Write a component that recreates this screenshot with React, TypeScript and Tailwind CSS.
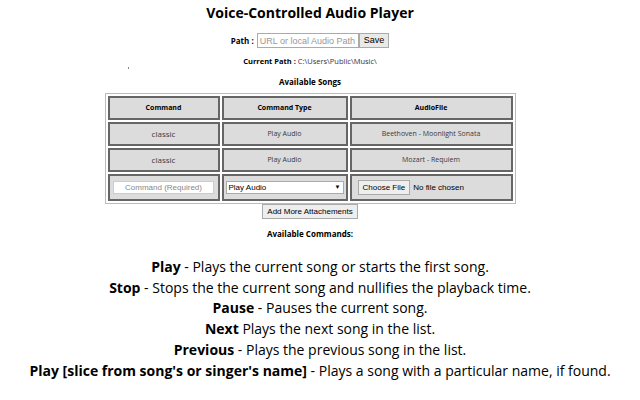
import React from 'react';

const songs = [
  { command: 'classic', type: 'Play Audio', file: 'Beethoven - Moonlight Sonata' },
  { command: 'classic', type: 'Play Audio', file: 'Mozart - Requiem' },
];

const commands = [
  { name: 'Play', sep: ' - ', text: 'Plays the current song or starts the first song.' },
  { name: 'Stop', sep: ' - ', text: 'Stops the the current song and nullifies the playback time.' },
  { name: 'Pause', sep: ' - ', text: 'Pauses the current song.' },
  { name: 'Next', sep: ' ', text: 'Plays the next song in the list.' },
  { name: 'Previous', sep: ' - ', text: 'Plays the previous song in the list.' },
  { name: "Play [slice from song's or singer's name]", sep: ' - ', text: 'Plays a song with a particular name, if found.' },
];

const cell = 'border-2 border-[#666] bg-[#dcdcdc] text-center align-middle';

export default function App() {
  return (
    <div className="w-[640px] h-[400px] bg-white text-black overflow-hidden font-['Open_Sans',sans-serif]">
      <div className="w-[620px]">
        {/* Header */}
        <h1 className="pt-[1px] text-center text-[14px] font-bold leading-[24px]">Voice-Controlled Audio Player</h1>

        <div className="mt-[8px] flex items-center justify-center text-[8px] font-bold">
          <span className="mr-[3px]">Path :</span>
          <input
            className="w-[102px] h-[15px] border border-[#aaa] px-[2px] text-[9px] font-normal font-['Liberation_Sans',sans-serif] placeholder:text-[#999]"
            placeholder="URL or local Audio Path"
          />
          <button className="h-[15px] px-[4px] border border-[#aaa] bg-[#e9e9e9] text-[9px] font-normal font-['Liberation_Sans',sans-serif]">
            Save
          </button>
        </div>

        <div className="mt-[8px] text-center text-[7.5px] leading-[10px]">
          <span className="font-bold">Current Path : </span>
          <span className="text-[#334]">C:\Users\Public\Music\</span>
        </div>

        <div className="ml-[128px] mt-[1px] h-[2px] w-[1px] bg-[#888]" />

        <div className="mt-[8px] text-center text-[8px] font-bold leading-[10px]">Available Songs</div>

        {/* Songs table */}
        <table className="mx-auto mt-[6px] border-separate border-spacing-[2px] border border-[#bbb] text-[7px]">
          <thead>
            <tr className="h-[24px] font-bold">
              <th className={`${cell} w-[112px]`}>Command</th>
              <th className={`${cell} w-[126px]`}>Command Type</th>
              <th className={`${cell} w-[163px]`}>AudioFile</th>
            </tr>
          </thead>
          <tbody className="text-[#3a3a3a]">
            {songs.map((s, i) => (
              <tr key={i} className="h-[24px]">
                <td className={`${cell} text-[8px]`}>{s.command}</td>
                <td className={cell}>{s.type}</td>
                <td className={cell}>{s.file}</td>
              </tr>
            ))}
            <tr className="h-[27px]">
              <td className={cell}>
                <input
                  className="w-[101px] h-[13px] border border-[#ccc] bg-white text-center text-[8px] font-['Liberation_Sans',sans-serif] placeholder:text-[#888]"
                  placeholder="Command (Required)"
                />
              </td>
              <td className={cell}>
                <div className="mx-auto flex w-[118px] h-[13px] items-center justify-between border border-[#aaa] bg-white px-[2px] text-[8px] text-black font-['Liberation_Sans',sans-serif]">
                  <span>Play Audio</span>
                  <span className="text-[6px]">▼</span>
                </div>
              </td>
              <td className={`${cell} text-left`}>
                <div className="flex items-center pl-[6px] text-[8px] text-black font-['Liberation_Sans',sans-serif]">
                  <span className="h-[15px] px-[4px] border border-[#aaa] bg-[#eee] leading-[13px]">Choose File</span>
                  <span className="ml-[3px]">No file chosen</span>
                </div>
              </td>
            </tr>
          </tbody>
        </table>

        <div className="flex justify-center">
          <button className="h-[15px] px-[4px] border border-[#aaa] bg-[#eee] text-[8px] font-['Liberation_Sans',sans-serif]">
            Add More Attachements
          </button>
        </div>

        <div className="mt-[10px] text-center text-[8px] font-bold leading-[10px]">Available Commands:</div>
      </div>

      {/* Commands */}
      <div className="mt-[18px] text-center text-[14px] leading-[20.7px]">
        {commands.map((c, i) => (
          <div key={i}>
            <span className="font-bold">{c.name}</span>
            {c.sep}
            {c.text}
          </div>
        ))}
      </div>
    </div>
  );
}
